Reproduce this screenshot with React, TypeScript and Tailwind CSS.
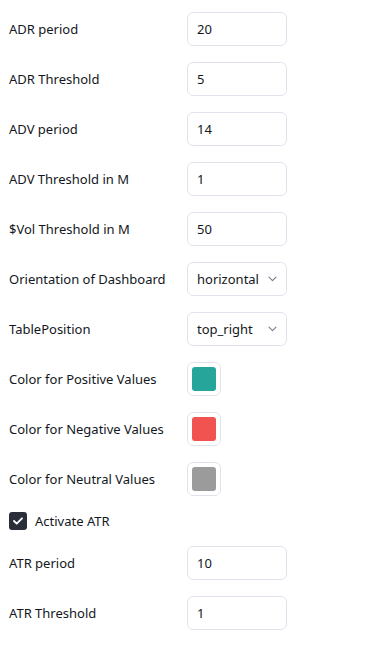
import { useState } from 'react';

type Row =
    | { kind: 'input'; label: string; value: string }
    | { kind: 'select'; label: string; value: string }
    | { kind: 'color'; label: string; color: string };

const topRows: Row[] = [
    { kind: 'input', label: 'ADR period', value: '20' },
    { kind: 'input', label: 'ADR Threshold', value: '5' },
    { kind: 'input', label: 'ADV period', value: '14' },
    { kind: 'input', label: 'ADV Threshold in M', value: '1' },
    { kind: 'input', label: '$Vol Threshold in M', value: '50' },
    { kind: 'select', label: 'Orientation of Dashboard', value: 'horizontal' },
    { kind: 'select', label: 'TablePosition', value: 'top_right' },
    { kind: 'color', label: 'Color for Positive Values', color: '#26a69a' },
    { kind: 'color', label: 'Color for Negative Values', color: '#f05350' },
    { kind: 'color', label: 'Color for Neutral Values', color: '#9b9b9b' },
];

const atrRows: Row[] = [
    { kind: 'input', label: 'ATR period', value: '10' },
    { kind: 'input', label: 'ATR Threshold', value: '1' },
];

function Chevron() {
    return (
        <svg width="9" height="6" viewBox="0 0 9 6" fill="none" className="shrink-0">
            <path d="M1 1.2l3.5 3.5L8 1.2" stroke="#787b86" strokeWidth="1.1" strokeLinecap="round" strokeLinejoin="round" />
        </svg>
    );
}

function Field({ row }: { row: Row }) {
    return (
        <div className="flex items-center h-[50px]">
            <div className="w-[178px] pt-[2px] text-[13px] text-[#131722]">{row.label}</div>
            {row.kind === 'input' && (
                <div className="w-[100px] h-[34px] rounded-[6px] border border-[#e0e3eb] flex items-center px-[9px] pt-[2px] text-[13px] text-[#131722]">
                    {row.value}
                </div>
            )}
            {row.kind === 'select' && (
                <div className="w-[100px] h-[34px] rounded-[6px] border border-[#e0e3eb] flex items-center justify-between pl-[9px] pr-[9px] text-[13px] text-[#131722]">
                    <span className="min-w-0 truncate pt-[2px] mr-[7px]">{row.value}</span>
                    <Chevron />
                </div>
            )}
            {row.kind === 'color' && (
                <div className="w-[34px] h-[34px] rounded-[6px] border border-[#e0e3eb] flex items-center justify-center">
                    <div className="w-[24px] h-[24px] rounded-[3px]" style={{ backgroundColor: row.color }} />
                </div>
            )}
        </div>
    );
}

export default function App() {
    const [atrOn, setAtrOn] = useState(true);

    return (
        <main className="w-[367px] min-h-[646px] bg-white pl-[9px] pt-[4px] font-['Noto_Sans','Liberation_Sans',sans-serif]">
            {topRows.map((row) => (
                <Field key={row.label} row={row} />
            ))}
            <label className="flex items-center h-[34px] cursor-pointer" onClick={() => setAtrOn(!atrOn)}>
                <span className="w-[18px] h-[18px] rounded-[3px] bg-[#2a2e39] flex items-center justify-center">
                    {atrOn && (
                        <svg width="10" height="8" viewBox="0 0 10 8" fill="none">
                            <path d="M1 4l2.7 2.7L9 1.3" stroke="white" strokeWidth="1.8" strokeLinecap="round" strokeLinejoin="round" />
                        </svg>
                    )}
                </span>
                <span className="ml-[8px] pt-[2px] text-[13px] text-[#131722]">Activate ATR</span>
            </label>
            {atrRows.map((row) => (
                <Field key={row.label} row={row} />
            ))}
        </main>
    );
}
